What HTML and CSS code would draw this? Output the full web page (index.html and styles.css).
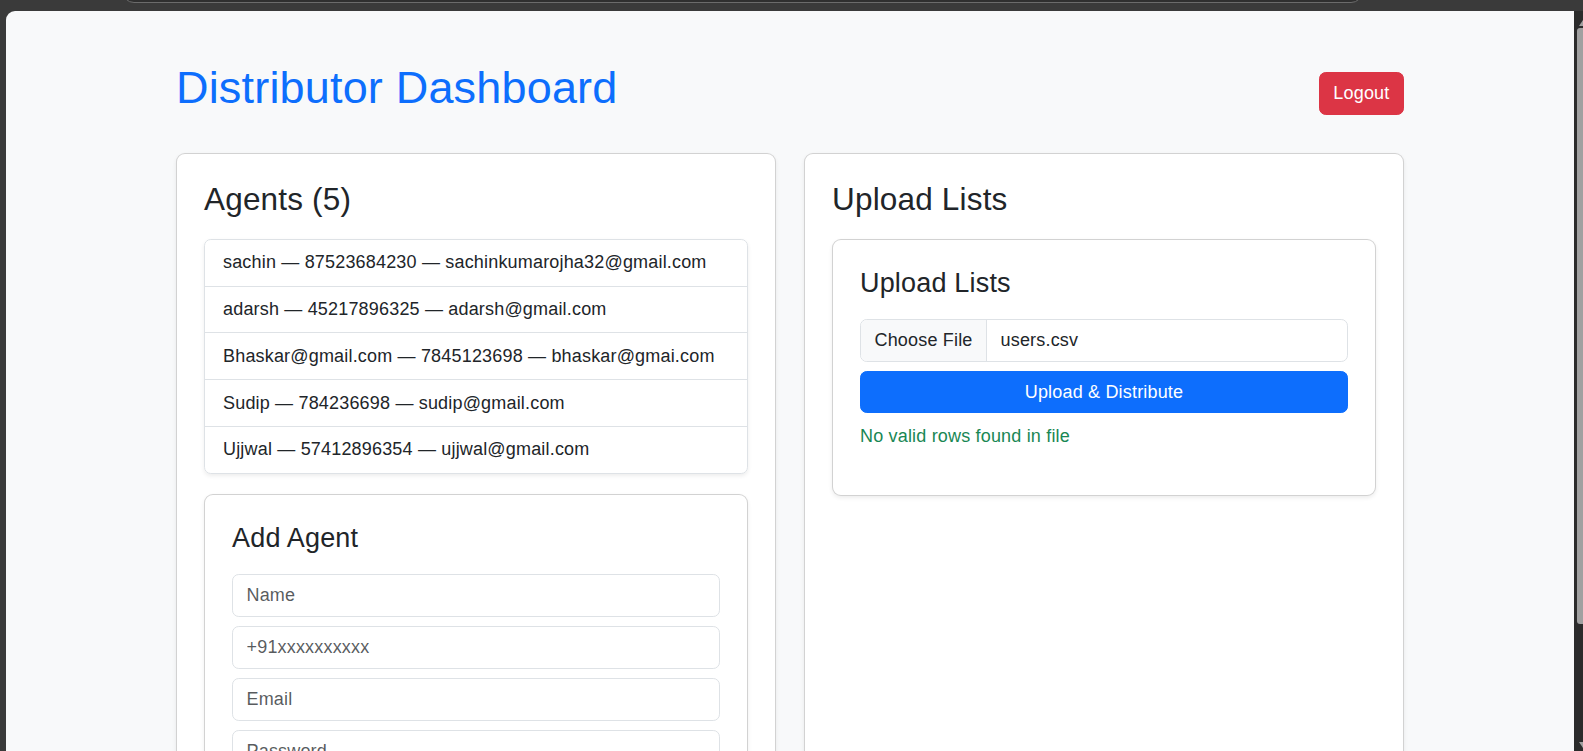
FILE: index.html
```html
<!DOCTYPE html>
<html lang="en">
<head>
<meta charset="utf-8">
<title>Distributor Dashboard</title>
<link rel="stylesheet" href="styles.css">
</head>
<body>
  <div class="chrome-top"><div class="addressbar"></div></div>
  <div class="chrome-row">
    <div class="chrome-left"></div>
    <main class="page">
      <div class="container">
        <header class="header">
          <h1 class="title">Distributor Dashboard</h1>
          <button class="btn btn-danger">Logout</button>
        </header>
        <div class="grid">
          <section class="card">
            <h3 class="h3">Agents (5)</h3>
            <ul class="list-group">
              <li class="list-item">sachin — 87523684230 — sachinkumarojha32@gmail.com</li>
              <li class="list-item">adarsh — 45217896325 — adarsh@gmail.com</li>
              <li class="list-item">Bhaskar@gmail.com — 7845123698 — bhaskar@gmai.com</li>
              <li class="list-item">Sudip — 784236698 — sudip@gmail.com</li>
              <li class="list-item">Ujjwal — 57412896354 — ujjwal@gmail.com</li>
            </ul>
            <div class="card inner">
              <h4 class="h4">Add Agent</h4>
              <input class="form-control" placeholder="Name">
              <input class="form-control" placeholder="+91xxxxxxxxxx">
              <input class="form-control" placeholder="Email">
              <input class="form-control" placeholder="Password">
              <button class="btn btn-primary">Add Agent</button>
            </div>
          </section>
          <section class="card">
            <h3 class="h3">Upload Lists</h3>
            <div class="card inner">
              <h4 class="h4">Upload Lists</h4>
              <div class="file-input">
                <span class="file-btn">Choose File</span>
                <span class="file-name">users.csv</span>
              </div>
              <button class="btn btn-primary btn-block">Upload &amp; Distribute</button>
              <p class="msg">No valid rows found in file</p>
            </div>
          </section>
        </div>
      </div>
    </main>
    <div class="scrollbar">
      <span class="arrow-up"></span>
      <div class="thumb"></div>
      <div class="track"></div>
      <span class="arrow-down"></span>
    </div>
  </div>
</body>
</html>
```
FILE: styles.css
```css
* { box-sizing: border-box; }

html, body {
  margin: 0;
  height: 751px;
  overflow: hidden;
}

body {
  background: #3a3a3a;
  display: flex;
  flex-direction: column;
  font-family: "Liberation Sans", Arial, sans-serif;
  font-size: 18px;
  line-height: 1.5;
  letter-spacing: 0.01em;
  color: #212529;
}

.chrome-top {
  height: 11px;
  flex: none;
  overflow: hidden;
}

.addressbar {
  width: 1241px;
  height: 34px;
  margin: -31px 0 0 122px;
  border: 1px solid #6b6b6b;
  border-radius: 12px;
  background: #2f2f2f;
}

.chrome-row {
  flex: 1;
  display: flex;
  min-height: 0;
}

.chrome-left {
  width: 6px;
  flex: none;
}

.page {
  flex: 1;
  background: #f8f9fa;
  border-top-left-radius: 9px;
  overflow: hidden;
}

.scrollbar {
  width: 9px;
  flex: none;
  background: #2b2b2b;
  display: flex;
  flex-direction: column;
  align-items: flex-end;
  padding-top: 9px;
}

.arrow-up, .arrow-down {
  width: 0;
  height: 0;
  border-left: 4px solid transparent;
  border-right: 0 solid transparent;
}

.arrow-up {
  border-bottom: 6px solid #a0a0a0;
  margin-bottom: 2px;
}

.arrow-down {
  border-top: 6px solid #a0a0a0;
  margin-bottom: 3px;
}

.thumb {
  width: 6px;
  height: 596px;
  background: #a0a0a0;
  border-radius: 3px 0 0 3px;
}

.track { flex: 1; }

.container {
  width: 1228px;
  margin: 0 auto;
  padding-top: 50px;
}

.header {
  display: flex;
  justify-content: space-between;
  align-items: center;
  margin-bottom: 29px;
}

.title {
  margin: 0 0 9px;
  font-size: 45px;
  font-weight: 400;
  line-height: 1.2;
  color: #0d6efd;
}

.btn {
  font-family: inherit;
  font-size: 18px;
  line-height: 27px;
  letter-spacing: 0.01em;
  padding: 6.75px 13.5px;
  border: 1px solid transparent;
  border-radius: 6.75px;
  color: #fff;
  cursor: pointer;
}

.btn-danger {
  background: #dc3545;
  border-color: #dc3545;
  margin-top: 2px;
}

.btn-primary {
  background: #0d6efd;
  border-color: #0d6efd;
}

.btn-block {
  display: block;
  width: 100%;
}

.grid {
  display: grid;
  grid-template-columns: 1fr 1fr;
  gap: 28px;
  align-items: stretch;
}

.card {
  background: #fff;
  border: 1px solid rgba(0, 0, 0, 0.175);
  border-radius: 9px;
  padding: 27px;
  box-shadow: 0 2px 4px rgba(0, 0, 0, 0.075);
  min-height: 900px;
}

.card.inner {
  min-height: 0;
}

.h3 {
  margin: 0 0 20px;
  font-size: 31.5px;
  font-weight: 400;
  line-height: 1.2;
}

.h4 {
  margin: 0 0 20px;
  font-size: 27px;
  font-weight: 400;
  line-height: 1.2;
}

.list-group {
  list-style: none;
  margin: 0 0 20px;
  padding: 0;
  border: 1px solid #dee2e6;
  border-radius: 6.75px;
  box-shadow: 0 2px 4px rgba(0, 0, 0, 0.075);
}

.list-item {
  padding: 9.4px 18px;
  line-height: 27px;
  border-bottom: 1px solid #dee2e6;
}

.list-item:last-child {
  border-bottom: 0;
}

.form-control {
  display: block;
  width: 100%;
  height: 42.75px;
  margin: 0 0 9.3px;
  padding: 6.75px 13.5px;
  font-family: inherit;
  font-size: 18px;
  line-height: 27px;
  letter-spacing: 0.01em;
  color: #212529;
  background: #fff;
  border: 1px solid #dee2e6;
  border-radius: 6.75px;
}

.form-control::placeholder {
  color: rgba(33, 37, 41, 0.75);
}

.file-input {
  display: flex;
  height: 42.75px;
  margin-bottom: 9px;
  border: 1px solid #dee2e6;
  border-radius: 6.75px;
  overflow: hidden;
  line-height: 27px;
}

.file-btn {
  padding: 6.75px 13.5px;
  background: #f8f9fa;
  border-right: 1px solid #dee2e6;
}

.file-name {
  padding: 6.75px 13.5px;
}

.msg {
  margin: 10px 0 18px;
  color: #198754;
}
```
